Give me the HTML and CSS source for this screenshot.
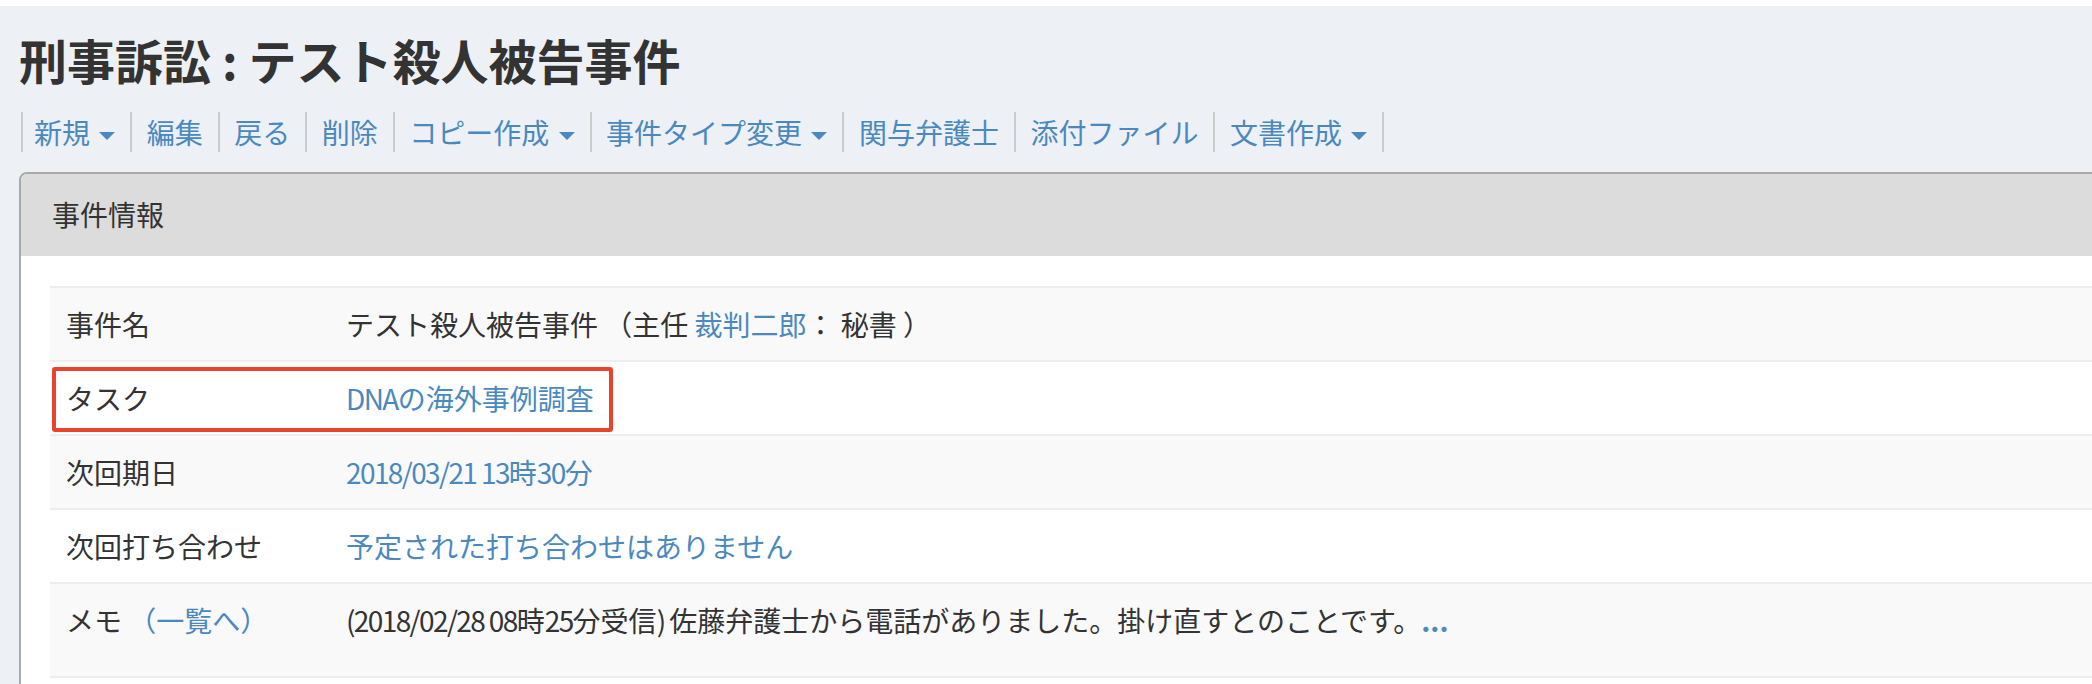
FILE: index.html
```html
<!DOCTYPE html>
<html lang="ja">
<head>
<meta charset="utf-8">
<title>刑事訴訟 : テスト殺人被告事件</title>
<link rel="stylesheet" href="styles.css">
</head>
<body>
<div class="page">
  <h1 class="title">刑事訴訟 : テスト殺人被告事件</h1>
  <ul class="toolbar">
    <li class="first"><a href="#">新規 <span class="caret"></span></a></li>
    <li><a href="#">編集</a></li>
    <li><a href="#">戻る</a></li>
    <li><a href="#">削除</a></li>
    <li><a href="#">コピー作成 <span class="caret"></span></a></li>
    <li><a href="#">事件タイプ変更 <span class="caret"></span></a></li>
    <li><a href="#">関与弁護士</a></li>
    <li><a href="#">添付ファイル</a></li>
    <li class="last"><a href="#">文書作成 <span class="caret"></span></a></li>
  </ul>
  <div class="panel">
    <div class="panel-heading">事件情報</div>
    <div class="panel-body">
      <div class="table-wrap">
        <table class="info">
          <tr class="odd">
            <td class="label">事件名</td>
            <td class="value">テスト殺人被告事件 （主任 <a href="#">裁判二郎</a>： 秘書 ）</td>
          </tr>
          <tr>
            <td class="label">タスク</td>
            <td class="value"><a href="#"><span class="latin">DNA</span>の海外事例調査</a></td>
          </tr>
          <tr class="odd">
            <td class="label">次回期日</td>
            <td class="value"><a href="#"><span class="latin">2018/03/21 13</span>時<span class="latin">30</span>分</a></td>
          </tr>
          <tr>
            <td class="label">次回打ち合わせ</td>
            <td class="value"><a href="#">予定された打ち合わせはありません</a></td>
          </tr>
          <tr class="odd memo">
            <td class="label">メモ <a href="#">（一覧へ）</a></td>
            <td class="value"><span class="latin">(2018/02/28 08</span>時<span class="latin">25</span>分受信<span class="latin">) </span>佐藤弁護士から電話がありました。掛け直すとのことです。<a href="#" class="more">...</a></td>
          </tr>
        </table>
        <div class="highlight"></div>
      </div>
    </div>
  </div>
</div>
</body>
</html>
```
FILE: styles.css
```css
html, body {
  margin: 0;
  padding: 0;
  background: #ffffff;
  overflow: hidden;
}

body {
  font-family: "Noto Sans CJK JP", "Noto Sans", sans-serif;
  font-size: 28px;
  color: #333333;
}

a {
  color: #4a89bf;
  text-decoration: none;
}

.page {
  margin-top: 6px;
  background: #edf0f5;
  padding: 27px 0 0 19px;
  height: 678px;
  box-sizing: border-box;
}

.title {
  margin: 0;
  font-size: 48px;
  line-height: 52px;
  font-weight: 700;
  color: #333333;
}

.toolbar {
  list-style: none;
  margin: 27px 0 0 2px;
  padding: 0;
  display: flex;
  height: 40px;
}

.toolbar li {
  border-left: 2px solid #cccccc;
  line-height: 40px;
  font-size: 28px;
}

.toolbar li.last {
  border-right: 2px solid #cccccc;
}

.toolbar a {
  display: block;
  padding: 0 15px 0 14.5px;
}

.toolbar li.first a {
  padding-left: 11px;
}

.caret {
  display: inline-block;
  width: 0;
  height: 0;
  margin-left: 3px;
  vertical-align: middle;
  border-top: 8px solid #4a89bf;
  border-left: 8px solid transparent;
  border-right: 8px solid transparent;
}

.panel {
  margin-top: 20px;
  margin-right: -80px;
  border: 2px solid #a9a9a9;
  border-radius: 8px 8px 0 0;
  background: #ffffff;
}

.panel-heading {
  background: #dcdcdc;
  padding: 20px 30px 22px 31px;
  line-height: 40px;
  font-size: 28px;
  color: #333333;
  border-radius: 6px 6px 0 0;
}

.panel-body {
  padding: 30px 30px 30px 29px;
}

.table-wrap {
  position: relative;
}

.info {
  width: 100%;
  border-collapse: collapse;
  border-bottom: 2px solid #eeeeee;
}

.info td {
  padding: 16px 16px;
  line-height: 40px;
  border-top: 2px solid #eeeeee;
  vertical-align: top;
  white-space: nowrap;
}

.info td.label {
  width: 248px;
}

.info tr.odd td {
  background: #f9f9f9;
}

.info tr.memo td {
  padding-bottom: 36px;
}

.latin {
  letter-spacing: -1.6px;
}

.more {
  font-weight: 700;
}

.highlight {
  position: absolute;
  top: 81px;
  left: 2px;
  width: 561px;
  height: 65px;
  box-sizing: border-box;
  border: 4px solid #e9432b;
  border-radius: 3px;
}
```
